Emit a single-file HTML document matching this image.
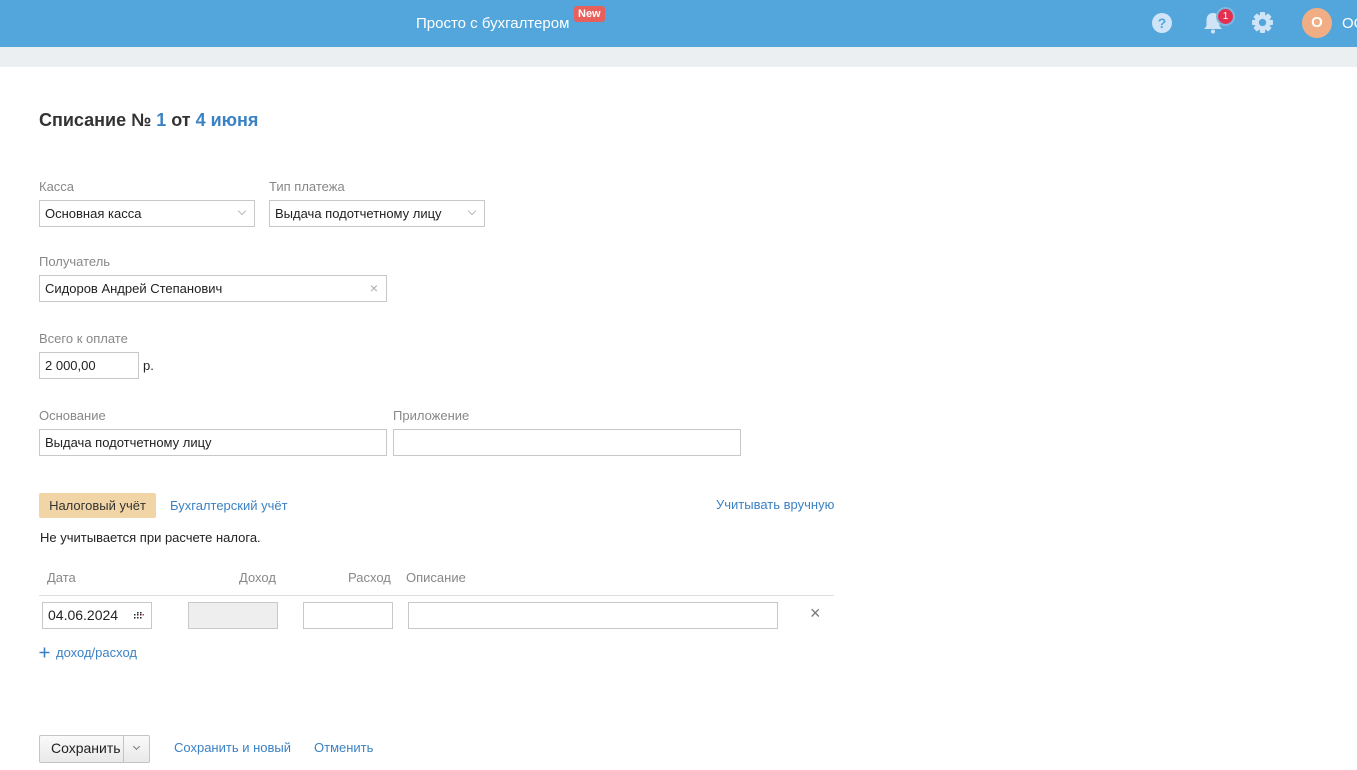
<!DOCTYPE html>
<html><head><meta charset="utf-8"><style>
*{box-sizing:border-box;margin:0;padding:0}
body{width:1357px;height:770px;overflow:hidden;background:#fff;font-family:"Liberation Sans",Arial,sans-serif;font-size:13px;color:#222;position:relative}
.a{position:absolute}
.hdr{left:0;top:0;width:1357px;height:47px;background:#53a6db}
.band{left:0;top:47px;width:1357px;height:20px;background:#eceff2}
.lbl{color:#888;font-size:13px}
.in{border:1px solid #c8c8c8;height:27px;line-height:25px;padding-left:5px;font-size:13px;color:#222;background:#fff}
.lnk{color:#3b82c4}
.chev{position:absolute;right:9px;top:7px;width:6px;height:6px;border-right:1px solid #bbb;border-bottom:1px solid #bbb;transform:rotate(45deg)}
</style></head><body>
<div class="a hdr"></div>
<div class="a band"></div>
<div class="a" style="left:416px;top:15px;color:#fff;font-size:15px">Просто с бухгалтером</div>
<div class="a" style="left:574px;top:6px;background:#e8605c;color:#fff;font-size:11px;font-weight:bold;padding:1px 4px;border-radius:3px;line-height:14px">New</div>
<svg class="a" style="left:1151px;top:12px" width="22" height="22" viewBox="0 0 22 22"><circle cx="11" cy="11" r="10" fill="#cfe4f6"/><text x="11" y="16" text-anchor="middle" font-family="Liberation Sans" font-weight="bold" font-size="14" fill="#53a6db">?</text></svg>
<svg class="a" style="left:1201px;top:11px" width="24" height="24" viewBox="0 0 24 24"><path d="M12 2c-4 0-6.5 3-6.5 7v6l-2.5 3h18l-2.5-3v-6c0-4-2.5-7-6.5-7z" fill="#cfe4f6"/><circle cx="12" cy="20.5" r="2" fill="#cfe4f6"/></svg>
<div class="a" style="left:1216px;top:7px;width:19px;height:19px;border-radius:50%;background:#e2304e;border:2px solid #7fb6e0;color:#fff;font-size:10px;text-align:center;line-height:15px">1</div>
<svg class="a" style="left:1251px;top:11px" width="23" height="23" viewBox="0 0 22 22"><g fill="#cfe4f6"><circle cx="11" cy="11" r="7.5"/><rect x="8.5" y="1" width="5" height="20" rx="1"/><rect x="8.5" y="1" width="5" height="20" rx="1" transform="rotate(45 11 11)"/><rect x="8.5" y="1" width="5" height="20" rx="1" transform="rotate(90 11 11)"/><rect x="8.5" y="1" width="5" height="20" rx="1" transform="rotate(135 11 11)"/></g><circle cx="11" cy="11" r="3.5" fill="#53a6db"/></svg>
<div class="a" style="left:1302px;top:8px;width:30px;height:30px;border-radius:50%;background:#f1ae85;color:#fff;font-weight:bold;font-size:15px;text-align:center;line-height:30px">О</div>
<div class="a" style="left:1342px;top:15px;color:#fff;font-size:15px;line-height:17px">ОО</div>

<div class="a" style="left:39px;top:110px;font-size:18px;font-weight:bold;color:#333">Списание № <span class="lnk">1</span> от <span class="lnk">4 июня</span></div>

<div class="a lbl" style="left:39px;top:179px">Касса</div>
<div class="a in" style="left:39px;top:200px;width:216px">Основная касса<span class="chev"></span></div>
<div class="a lbl" style="left:269px;top:179px">Тип платежа</div>
<div class="a in" style="left:269px;top:200px;width:216px">Выдача подотчетному лицу<span class="chev"></span></div>

<div class="a lbl" style="left:39px;top:254px">Получатель</div>
<div class="a in" style="left:39px;top:275px;width:348px">Сидоров Андрей Степанович<span style="position:absolute;right:8px;top:0;color:#aaa;font-size:14px">×</span></div>

<div class="a lbl" style="left:39px;top:331px">Всего к оплате</div>
<div class="a in" style="left:39px;top:352px;width:100px">2 000,00</div>
<div class="a" style="left:143px;top:358px">р.</div>

<div class="a lbl" style="left:39px;top:408px">Основание</div>
<div class="a in" style="left:39px;top:429px;width:348px">Выдача подотчетному лицу</div>
<div class="a lbl" style="left:393px;top:408px">Приложение</div>
<div class="a in" style="left:393px;top:429px;width:348px"></div>

<div class="a" style="left:39px;top:493px;width:117px;height:25px;background:#f2d5a7;border-radius:2px;line-height:25px;text-align:center;color:#333">Налоговый учёт</div>
<div class="a lnk" style="left:170px;top:498px">Бухгалтерский учёт</div>
<div class="a lnk" style="left:716px;top:497px">Учитывать вручную</div>
<div class="a" style="left:40px;top:530px">Не учитывается при расчете налога.</div>

<div class="a lbl" style="left:47px;top:570px">Дата</div>
<div class="a lbl" style="left:239px;top:570px">Доход</div>
<div class="a lbl" style="left:348px;top:570px">Расход</div>
<div class="a lbl" style="left:406px;top:570px">Описание</div>
<div class="a" style="left:39px;top:595px;width:795px;height:1px;background:#ddd"></div>
<div class="a in" style="left:42px;top:602px;width:110px;font-size:14px">04.06.2024
<svg style="position:absolute;right:7px;top:9px" width="10" height="8" viewBox="0 0 10 8"><g fill="#222"><rect x="0" y="2" width="1.5" height="1.5"/><rect x="3" y="2" width="1.5" height="1.5"/><rect x="6" y="2" width="1.5" height="1.5"/><rect x="0" y="5" width="1.5" height="1.5"/><rect x="3" y="5" width="1.5" height="1.5"/><rect x="6" y="5" width="1.5" height="1.5"/><rect x="3" y="0" width="1.5" height="1.5"/><rect x="6" y="0" width="1.5" height="1.5"/></g><rect x="8.5" y="2" width="1.5" height="1.5" fill="#e2304e"/></svg></div>
<div class="a in" style="left:188px;top:602px;width:90px;background:#eee"></div>
<div class="a in" style="left:303px;top:602px;width:90px"></div>
<div class="a in" style="left:408px;top:602px;width:370px"></div>
<div class="a" style="left:810px;top:603px;color:#777;font-size:18px">×</div>
<svg class="a" style="left:39px;top:647px" width="11" height="11" viewBox="0 0 11 11"><path d="M5.5 0.5v10M0.5 5.5h10" stroke="#3b82c4" stroke-width="1.6"/></svg>
<div class="a lnk" style="left:56px;top:645px">доход/расход</div>

<div class="a" style="left:39px;top:735px;width:111px;height:28px;border:1px solid #c4c4c4;border-radius:2px;background:linear-gradient(#fafafa,#e9e9e9)"></div>
<div class="a" style="left:51px;top:740px;color:#222;font-size:14px">Сохранить</div>
<div class="a" style="left:123px;top:736px;width:1px;height:26px;background:#c4c4c4"></div>
<div class="a" style="left:134px;top:744px;width:5px;height:5px;border-right:1px solid #777;border-bottom:1px solid #777;transform:rotate(45deg)"></div>
<div class="a lnk" style="left:174px;top:740px">Сохранить и новый</div>
<div class="a lnk" style="left:314px;top:740px">Отменить</div>
</body></html>
